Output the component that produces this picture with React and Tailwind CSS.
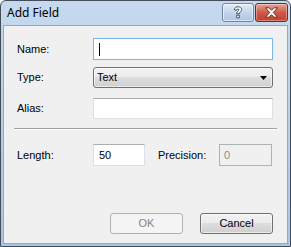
import React from "react";

function HelpButton() {
  return (
    <div className="flex h-[19px] w-[32px] items-center justify-center rounded-[3px] border border-[#6d87a6] bg-gradient-to-b from-[#e3ecf6] via-[#c3d5ea] to-[#aec6e2] shadow-[inset_0_0_0_1px_rgba(255,255,255,0.55)]">
      <svg width="10" height="13" viewBox="0 0 10 13">
        <path
          d="M1.5 4 C1.5 1.5 3 0.8 5 0.8 C7.2 0.8 8.6 2 8.6 3.8 C8.6 5.6 6.4 6 6.4 7.8 L3.7 7.8 C3.7 5.4 5.9 5 5.9 3.8 C5.9 3.2 5.5 2.9 5 2.9 C4.4 2.9 4.1 3.3 4.1 4 Z M3.7 9.2 L6.4 9.2 L6.4 11.8 L3.7 11.8 Z"
          fill="#ffffff"
          stroke="#3b4a5c"
          strokeWidth="0.9"
          strokeLinejoin="round"
        />
      </svg>
    </div>
  );
}

function CloseButton() {
  return (
    <div className="flex h-[19px] w-[33px] items-center justify-center rounded-[3px] border border-[#6e2a24] bg-gradient-to-b from-[#e6a597] via-[#cf5a47] to-[#c0412d] shadow-[inset_0_0_0_1px_rgba(255,255,255,0.35)]">
      <svg width="15" height="11" viewBox="0 0 15 11">
        <path
          d="M1.5 0.8 L5 0.8 L7.5 3.3 L10 0.8 L13.5 0.8 L9.3 5.5 L13.5 10.2 L10 10.2 L7.5 7.7 L5 10.2 L1.5 10.2 L5.7 5.5 Z"
          fill="#ffffff"
          stroke="#5a2019"
          strokeWidth="0.9"
          strokeLinejoin="round"
        />
      </svg>
    </div>
  );
}

function Row({ label, children, className = "" }) {
  return (
    <div className={`flex items-center ${className}`}>
      <div className="w-[76px] text-[11px] text-black">{label}</div>
      {children}
    </div>
  );
}

export default function App() {
  return (
    <div className="h-[247px] w-[291px] bg-white">
      <div className="flex h-full w-full flex-col rounded-t-[6px] border border-[#454d57] bg-gradient-to-b from-[#c6d9ee] to-[#a6c6e9] px-[2px] pb-[2px] font-['Liberation_Sans',sans-serif]">
        <div className="flex h-[24px] shrink-0 items-start pl-[4px] pt-[2px]">
          <div className="flex-1 pt-[3px] font-['Noto_Sans',sans-serif] text-[12px] leading-[14px] text-black">
            Add Field
          </div>
          <div className="flex gap-[1px]">
            <HelpButton />
            <CloseButton />
          </div>
        </div>

        <div className="flex flex-1 flex-col border border-[#8eaacb] bg-[#f0f0f0] pl-[13px] pr-[13px] pt-[12px]">
          <Row label="Name:">
            <div className="flex h-[22px] w-[180px] items-center border border-[#7eb4ea] bg-white pl-[5px]">
              <div className="h-[13px] w-[1px] bg-black" />
            </div>
          </Row>

          <Row label="Type:" className="mt-[7px]">
            <div className="flex h-[21px] w-[180px] items-center justify-between rounded-[3px] border border-[#707070] bg-[linear-gradient(#f2f2f2_0%,#ebebeb_50%,#dddddd_50%,#cfcfcf_100%)] pl-[3px] pr-[5px] shadow-[inset_0_0_0_1px_rgba(255,255,255,0.6)]">
              <span className="text-[11px] text-black">Text</span>
              <svg width="7" height="4" viewBox="0 0 7 4">
                <path d="M0 0 L7 0 L3.5 4 Z" fill="#000" />
              </svg>
            </div>
          </Row>

          <Row label="Alias:" className="mt-[10px]">
            <div className="h-[21px] w-[180px] border border-[#dbdfe6] border-t-[#abadb3] bg-white" />
          </Row>

          <div className="-mx-[3px] mt-[9px] h-[2px] border-t border-[#a0a0a0] bg-white" />

          <Row label="Length:" className="mt-[14px]">
            <div className="flex h-[22px] w-[52px] items-center border border-[#dbdfe6] border-t-[#abadb3] bg-white pl-[5px] text-[11px] text-black">
              50
            </div>
            <div className="w-[74px] pl-[13px] text-[11px] text-black">Precision:</div>
            <div className="flex h-[22px] w-[53px] items-center border border-[#adb2b5] bg-[#f0f0f0] pl-[4px] text-[11px] text-[#8a8a8a]">
              0
            </div>
          </Row>

          <div className="mt-[47px] flex justify-end gap-[17px] pr-[1px]">
            <div className="flex h-[21px] w-[73px] items-center justify-center rounded-[3px] border border-[#adb2b5] bg-[#f4f4f4] text-[11px] text-[#838383]">
              OK
            </div>
            <div className="flex h-[21px] w-[73px] items-center justify-center rounded-[3px] border border-[#707070] bg-[linear-gradient(#f2f2f2_0%,#ebebeb_50%,#dddddd_50%,#cfcfcf_100%)] text-[11px] text-black shadow-[inset_0_0_0_1px_rgba(255,255,255,0.6)]">
              Cancel
            </div>
          </div>
        </div>
      </div>
    </div>
  );
}
